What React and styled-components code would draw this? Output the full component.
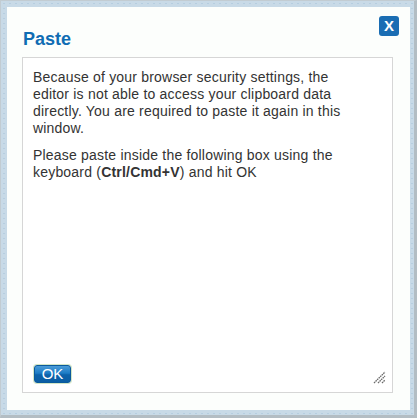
import React from "react";
import styled, { createGlobalStyle } from "styled-components";

const GlobalStyle = createGlobalStyle`
  html, body { margin: 0; padding: 0; background: #ffffff; }
  body { font-family: "Liberation Sans", Arial, sans-serif; }
  * { box-sizing: border-box; }
`;

const Frame = styled.div`
  width: 417px;
  height: 418px;
  border-top: 1px solid #c2ccd2;
  border-left: 1px solid #c2ccd2;
  border-right: 3px solid #b3bdc3;
  border-bottom: 3px solid #b3bdc3;
  padding: 6px 4px 5px 6px;
  background-color: #c8dae7;
  background-image: radial-gradient(#b6cee0 0.6px, transparent 1px);
  background-size: 6px 5px;
  display: flex;
`;

const Panel = styled.div`
  flex: 1;
  background: #fcfefc;
  display: flex;
  flex-direction: column;
  padding: 9px 17px 17px 15px;
`;

const Header = styled.div`
  height: 41px;
  display: flex;
  justify-content: space-between;
  align-items: flex-start;
`;

const Title = styled.h1`
  margin: 14px 0 0 1px;
  font-size: 18px;
  line-height: 18px;
  font-weight: bold;
  color: #0f6cb3;
`;

const CloseButton = styled.button`
  width: 20px;
  height: 20px;
  margin-right: -6px;
  padding: 0;
  border: none;
  border-radius: 3px;
  background: #1a6db3;
  color: #ffffff;
  font-family: "Liberation Sans", Arial, sans-serif;
  font-size: 15px;
  font-weight: bold;
  line-height: 20px;
  text-align: center;
  cursor: pointer;
`;

const Box = styled.div`
  position: relative;
  flex: 1;
  border: 1px solid #d6d6d6;
  background: #ffffff;
  display: flex;
  flex-direction: column;
`;

const Message = styled.div`
  padding: 11px 30px 0 10px;
  color: #333333;
  font-size: 14px;
  line-height: 17px;
  letter-spacing: 0.2px;
`;

const Para = styled.p`
  margin: 0 0 10px 0;
`;

const Footer = styled.div`
  margin-top: auto;
  padding: 0 0 9px 11px;
`;

const OkButton = styled.button`
  width: 37px;
  height: 18px;
  padding: 0;
  border: 1px solid #0b5a9c;
  border-radius: 3px;
  background: linear-gradient(#4b9bd8 0%, #1c7cc6 45%, #0c62aa 55%, #0b5ea4 100%);
  box-shadow: 0 0 0 1px #d3e6c6;
  color: #ffffff;
  font-family: "Liberation Sans", Arial, sans-serif;
  font-size: 15px;
  line-height: 16px;
  cursor: pointer;
`;

const Grip = styled.svg`
  position: absolute;
  right: 6px;
  bottom: 8px;
  width: 13px;
  height: 13px;
`;

export default function App() {
  return (
    <>
      <GlobalStyle />
      <Frame>
        <Panel>
          <Header>
            <Title>Paste</Title>
            <CloseButton aria-label="Close">X</CloseButton>
          </Header>
          <Box>
            <Message>
              <Para>
                Because of your browser security settings, the editor is not able to access
                your clipboard data directly. You are required to paste it again in this window.
              </Para>
              <Para>
                Please paste inside the following box using the keyboard (<b>Ctrl/Cmd+V</b>) and hit OK
              </Para>
            </Message>
            <Footer>
              <OkButton>OK</OkButton>
            </Footer>
            <Grip viewBox="0 0 13 13">
              <g stroke="#6b6b6b" strokeWidth="1.3" strokeDasharray="1.6 0.6">
                <line x1="1" y1="12" x2="12" y2="1" />
                <line x1="5" y1="12" x2="12" y2="5" />
                <line x1="9" y1="12" x2="12" y2="9" />
              </g>
            </Grip>
          </Box>
        </Panel>
      </Frame>
    </>
  );
}
